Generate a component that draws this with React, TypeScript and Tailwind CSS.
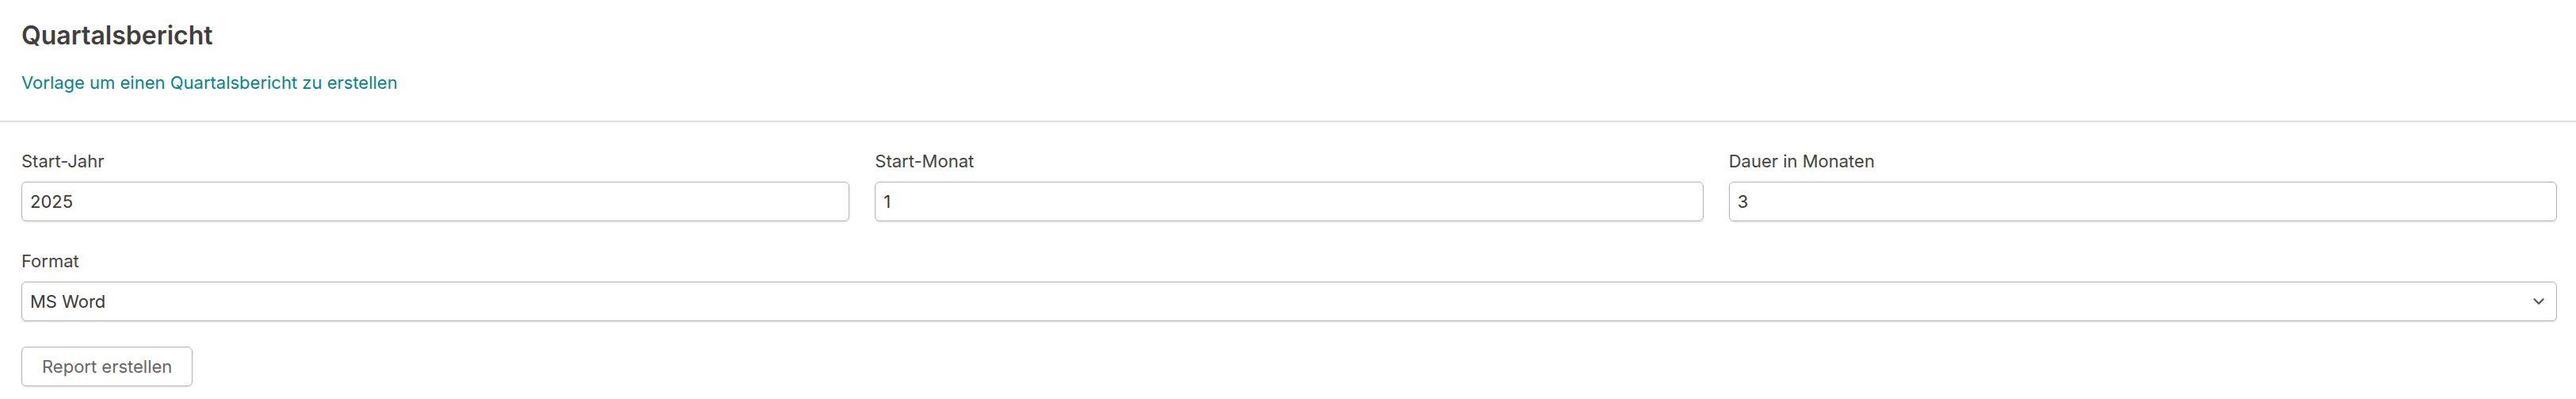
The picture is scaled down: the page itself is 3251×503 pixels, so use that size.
import { ChevronDown } from 'lucide-react';

const fields = [
  { label: 'Start-Jahr', value: '2025' },
  { label: 'Start-Monat', value: '1' },
  { label: 'Dauer in Monaten', value: '3' },
];

const inputCls =
  'w-full h-[50px] px-[10px] bg-white border border-[#b3b3b3] rounded-[6px] shadow-[0_2px_2px_rgba(0,0,0,0.07)] text-[22px] text-[#3a3a3a] focus:outline-none';

export default function App() {
  return (
    <div className="min-h-screen bg-white font-['Inter','Liberation_Sans',sans-serif] text-[#444]">
      {/* Header */}
      <div className="pl-[27px] pr-[24px] pt-[25px] pb-[34px]">
        <h1 className="text-[32px] leading-[40px] font-semibold text-[#3f3f3f]">Quartalsbericht</h1>
        <p className="mt-[25px] text-[22px] leading-[28px] text-[#00878a]">
          Vorlage um einen Quartalsbericht zu erstellen
        </p>
      </div>

      <div className="h-[2px] bg-[#e0e0e0]" />

      <form className="pl-[27px] pr-[24px] pt-[35px]" onSubmit={(e) => e.preventDefault()}>
        <div className="grid grid-cols-3 gap-x-8">
          {fields.map((f) => (
            <div key={f.label}>
              <label className="block text-[22px] leading-[28px] mb-[12px]">{f.label}</label>
              <input type="text" defaultValue={f.value} className={inputCls} />
            </div>
          ))}
        </div>

        <div className="mt-[36px]">
          <label className="block text-[22px] leading-[28px] mb-[12px]">Format</label>
          <div className="relative">
            <select defaultValue="word" className={`${inputCls} appearance-none pr-10`}>
              <option value="word">MS Word</option>
              <option value="pdf">PDF</option>
            </select>
            <ChevronDown
              size={22}
              strokeWidth={2.5}
              className="absolute right-[12px] top-1/2 -translate-y-1/2 text-[#555] pointer-events-none"
            />
          </div>
        </div>

        <button
          type="submit"
          className="mt-[32px] h-[50px] px-[25px] bg-white border border-[#b3b3b3] rounded-[6px] shadow-[0_2px_2px_rgba(0,0,0,0.07)] text-[22px] text-[#666]"
        >
          Report erstellen
        </button>
      </form>
    </div>
  );
}
